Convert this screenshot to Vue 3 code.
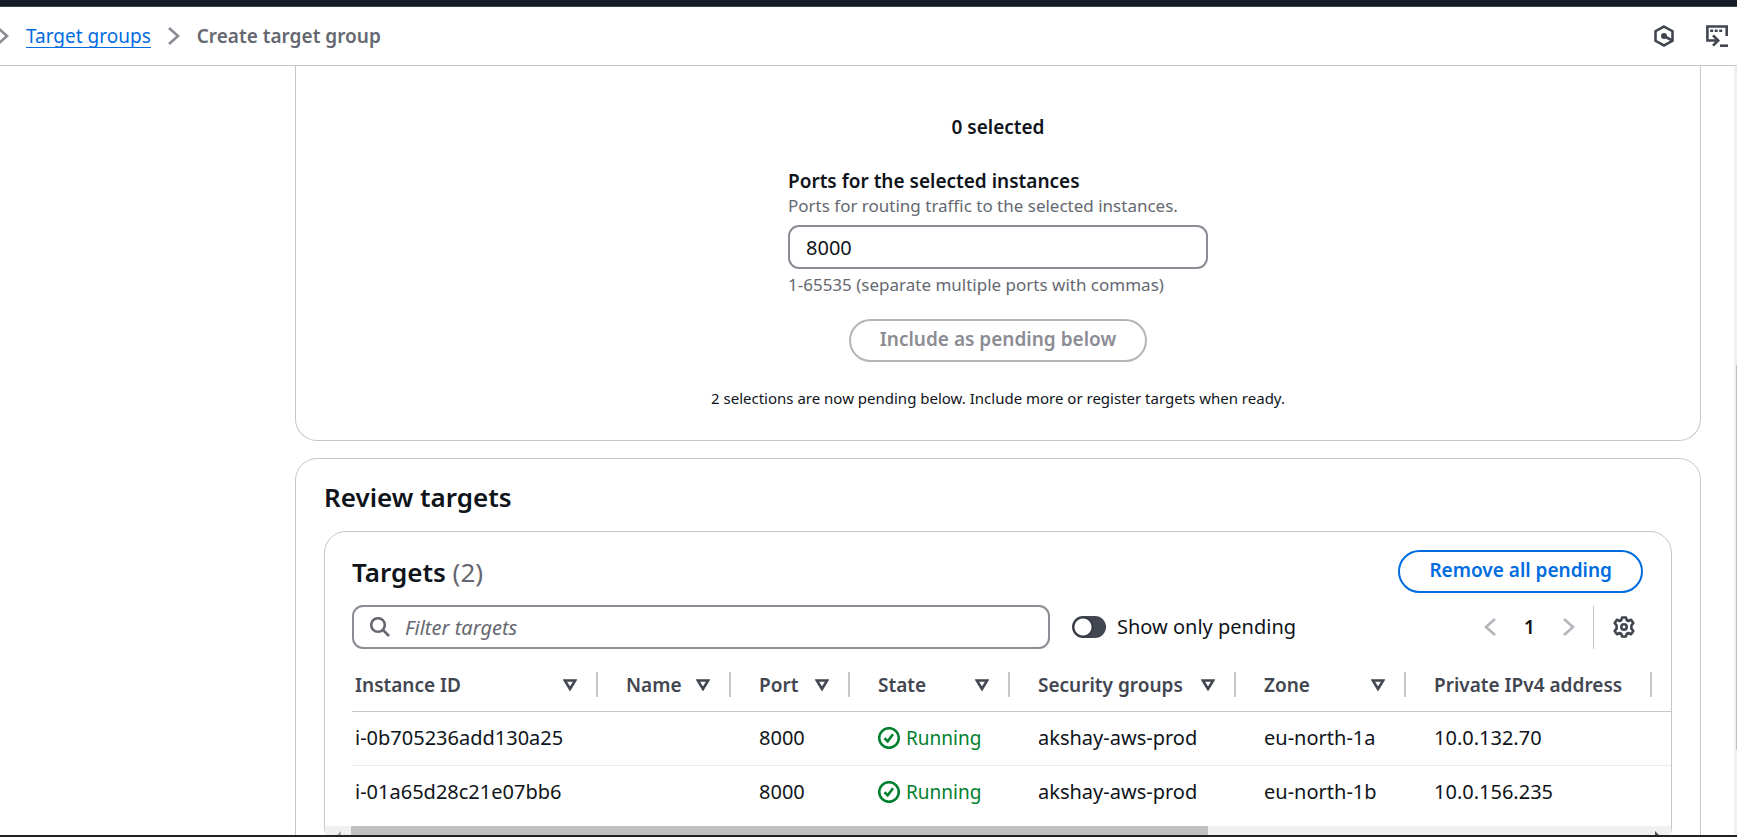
<script setup>
import { ref } from 'vue'

const ports = ref('8000')
const filter = ref('')
const onlyPending = ref(false)

const columns = [
  { key: 'id', label: 'Instance ID', sortable: true },
  { key: 'name', label: 'Name', sortable: true },
  { key: 'port', label: 'Port', sortable: true },
  { key: 'state', label: 'State', sortable: true },
  { key: 'groups', label: 'Security groups', sortable: true },
  { key: 'zone', label: 'Zone', sortable: true },
  { key: 'ip', label: 'Private IPv4 address', sortable: false }
]

const rows = [
  { id: 'i-0b705236add130a25', name: '', port: '8000', state: 'Running', groups: 'akshay-aws-prod', zone: 'eu-north-1a', ip: '10.0.132.70' },
  { id: 'i-01a65d28c21e07bb6', name: '', port: '8000', state: 'Running', groups: 'akshay-aws-prod', zone: 'eu-north-1b', ip: '10.0.156.235' }
]
</script>

<template>
  <div class="app">
    <div class="topbar"></div>
    <header class="header">
      <nav class="crumbs" aria-label="Breadcrumbs">
        <svg class="chev" viewBox="0 0 12 20" aria-hidden="true"><path d="M1 2l9 8-9 8" /></svg>
        <a href="#">Target groups</a>
        <svg class="chev" viewBox="0 0 12 20" aria-hidden="true"><path d="M1 2l9 8-9 8" /></svg>
        <span class="current" aria-current="page">Create target group</span>
      </nav>
      <div class="tools">
        <button type="button" class="tool" aria-label="Resources">
          <svg viewBox="0 0 22 22" aria-hidden="true">
            <path d="M11 1.6l8.5 4.6v9.6L11 20.4l-8.500-4.600V6.200z" />
            <path d="M11 11l8 4.300" />
            <circle cx="11" cy="11" r="3" class="solid" />
          </svg>
        </button>
        <button type="button" class="tool" aria-label="CloudShell">
          <svg viewBox="0 0 22 22" aria-hidden="true">
            <path d="M20.700 11V1.500H1.400v14h10" />
            <path d="M7 10.300l5.200 5.200L7 20.700" />
            <path d="M14 20.700h8" />
            <path d="M4.200 5.700h3M8.700 5.700h3M13.200 5.700h3" />
          </svg>
        </button>
      </div>
    </header>

    <div class="viewport">
      <main class="content">
        <section class="card register">
          <p class="selected">0 selected</p>
          <div class="field">
            <label for="ports">Ports for the selected instances</label>
            <p class="desc">Ports for routing traffic to the selected instances.</p>
            <input id="ports" v-model="ports" class="box" type="text" />
            <p class="hint">1-65535 (separate multiple ports with commas)</p>
          </div>
          <button type="button" class="btn muted" disabled>Include as pending below</button>
          <p class="note">2 selections are now pending below. Include more or register targets when ready.</p>
        </section>

        <section class="card review">
          <h2>Review targets</h2>
          <div class="panel">
            <div class="panel-head">
              <h3>Targets <span>(2)</span></h3>
              <button type="button" class="btn">Remove all pending</button>
            </div>
            <div class="filters">
              <div class="search">
                <svg viewBox="0 0 20 20" aria-hidden="true"><circle cx="8" cy="8" r="6.800" /><path d="M13 13l6 6" /></svg>
                <input v-model="filter" class="box" type="text" placeholder="Filter targets" aria-label="Filter targets" />
              </div>
              <label class="toggle">
                <input v-model="onlyPending" type="checkbox" role="switch" />
                Show only pending
              </label>
              <div class="pager">
                <button type="button" class="page-btn" aria-label="Previous page" disabled>
                  <svg class="chev" viewBox="0 0 12 20" aria-hidden="true"><path d="M11 2l-9 8 9 8" /></svg>
                </button>
                <button type="button" class="page-num" aria-current="page">1</button>
                <button type="button" class="page-btn" aria-label="Next page" disabled>
                  <svg class="chev" viewBox="0 0 12 20" aria-hidden="true"><path d="M1 2l9 8-9 8" /></svg>
                </button>
                <span class="rule"></span>
                <button type="button" class="tool" aria-label="Preferences">
                  <svg viewBox="0 0 22 22" aria-hidden="true">
                    <path stroke-linejoin="round" d="M9 1.500h4l.6 2.500 1.800 1 2.600-1.200 2.300 3.300-1.900 2.200v3.400l1.900 2.200-2.300 3.300-2.600-1.200-1.800 1-.6 2.500H9l-.6-2.500-1.800-1L4 18.200l-2.300-3.300 1.900-2.200V9.300L1.700 7.100 4 3.800 6.600 5l1.800-1z" />
                    <circle cx="11" cy="11" r="2.700" />
                  </svg>
                </button>
              </div>
            </div>

            <div class="table-wrap">
              <table>
                <colgroup>
                  <col v-for="c in columns" :key="c.key" :class="'c-' + c.key" />
                  <col />
                </colgroup>
                <thead>
                  <tr>
                    <th v-for="c in columns" :key="c.key" scope="col">
                      <div class="th">
                        {{ c.label }}
                        <svg v-if="c.sortable" viewBox="0 0 14 12" aria-hidden="true"><path d="M1.800 1.500h10.400L7 10z" /></svg>
                      </div>
                    </th>
                    <td></td>
                  </tr>
                </thead>
                <tbody>
                  <tr v-for="r in rows" :key="r.id">
                    <td v-for="c in columns" :key="c.key">
                      <span v-if="c.key === 'state'" class="status">
                        <svg viewBox="0 0 22 22" aria-hidden="true"><circle cx="11" cy="11" r="9.800" /><path d="M6.500 11.300l3.200 3 5.300-7" /></svg>
                        {{ r.state }}
                      </span>
                      <template v-else>{{ r[c.key] }}</template>
                    </td>
                    <td></td>
                  </tr>
                </tbody>
              </table>
            </div>
            <div class="hscroll" aria-hidden="true">
              <svg viewBox="0 0 22 9"><path d="M16 5v4h-4z" fill="#a3a3a3" /></svg>
              <span class="track"><span class="thumb"></span></span>
              <svg viewBox="0 0 22 9"><path d="M6 5v4h4z" fill="#505050" /></svg>
            </div>
          </div>
        </section>
      </main>
      <div class="vscroll" aria-hidden="true"><span></span></div>
    </div>
    <div class="taskbar"></div>
  </div>
</template>

<style>
body {
  margin: 0;
  background: #fff;
}
</style>

<style scoped>
.app {
  display: flex;
  flex-direction: column;
  height: 100vh;
  overflow: hidden;
  color: #0f141a;
  font-family: "Noto Sans", "Open Sans", sans-serif;
  font-size: 19px;
  line-height: 26px;
}
.app * {
  box-sizing: border-box;
}
p, h2, h3 {
  margin: 0;
}
button, input {
  font: inherit;
  color: inherit;
}
svg {
  display: block;
  flex: none;
  fill: none;
  stroke: currentColor;
  stroke-width: 2.6;
}
.topbar {
  flex: none;
  height: 7px;
  background: #161d26;
  border-bottom: 1px solid #424650;
}
.header {
  flex: none;
  display: flex;
  align-items: center;
  justify-content: space-between;
  height: 59px;
  padding-right: 9px;
  border-bottom: 1px solid #c6c6cd;
}
.crumbs {
  display: flex;
  align-items: center;
  gap: 17px;
  margin-left: -3px;
}
.crumbs a {
  color: #006ce0;
  line-height: 22px;
  text-decoration: none;
  border-bottom: 1px solid #006ce0;
}
.chev {
  width: 12px;
  height: 20px;
  color: #8c8c94;
}
.current {
  padding-bottom: 1px;
  color: #656871;
  font-weight: 600;
}
.tools {
  display: flex;
  gap: 31px;
}
.tool {
  padding: 0;
  border: 0;
  background: none;
  color: #424650;
}
.tool svg {
  width: 22px;
  height: 22px;
}
.solid {
  fill: currentColor;
  stroke: none;
}
.viewport {
  flex: 1;
  min-height: 0;
  display: flex;
}
.content {
  flex: 1;
  min-width: 0;
  overflow: hidden;
  padding: 0 33px 0 295px;
}
.vscroll {
  flex: none;
  width: 3px;
  padding: 299px 0 85px 2px;
  background: #f0f0f0;
}
.vscroll span {
  display: block;
  height: 100%;
  background: #c1c1c1;
}
.card {
  border: 1px solid #c6c6cd;
  border-radius: 22px;
}
.register {
  display: flex;
  flex-direction: column;
  align-items: center;
  padding: 48px 28px 30px;
  border-top: 0;
  border-radius: 0 0 22px 22px;
}
.selected {
  font-weight: 600;
}
.field {
  display: flex;
  flex-direction: column;
  width: 420px;
  margin-top: 28px;
}
.field label {
  font-weight: 600;
}
.desc, .hint {
  color: #656871;
  font-size: 17px;
  line-height: 24px;
}
.box {
  width: 100%;
  height: 44px;
  padding: 0 16px;
  border: 2px solid #8c8c94;
  border-radius: 11px;
  background: #fff;
  font-size: 20px;
}
.desc {
  margin-bottom: 7px;
}
.hint {
  margin-top: 4px;
}
.btn {
  height: 43px;
  padding: 0 29px 3px;
  border: 2px solid #006ce0;
  border-radius: 22px;
  background: #fff;
  color: #006ce0;
  font-weight: 600;
}
.btn.muted {
  margin-top: 22px;
  border-color: #b4b4bb;
  color: #8c8c94;
}
.note {
  margin-top: 24px;
  font-size: 15px;
  line-height: 24px;
}
.review {
  margin-top: 17px;
  padding: 21px 28px 28px;
}
h2, h3 {
  font-size: 26px;
  line-height: 34px;
  font-weight: 600;
}
h3 span {
  color: #656871;
  font-weight: 400;
}
.panel {
  margin-top: 17px;
  border: 1px solid #c6c6cd;
  border-radius: 22px;
}
.panel-head {
  display: flex;
  align-items: center;
  justify-content: space-between;
  padding: 18px 28px 12px 27px;
}
.filters {
  display: flex;
  align-items: center;
  padding: 0 28px 0 27px;
}
.search {
  position: relative;
  flex: 1;
  max-width: 698px;
}
.search svg {
  position: absolute;
  left: 18px;
  top: 12px;
  width: 20px;
  height: 20px;
  color: #656871;
}
.search .box {
  display: block;
  padding-left: 51px;
}
.search .box::placeholder {
  color: #656871;
  font-style: italic;
  opacity: 1;
}
.toggle {
  display: flex;
  align-items: center;
  gap: 11px;
  margin-left: 22px;
  font-size: 20px;
}
.toggle input {
  appearance: none;
  width: 34px;
  height: 22px;
  margin: 0;
  border-radius: 11px;
  background: radial-gradient(circle at 11px 11px, #fff 8px, #2f333b 9px, #424650 11px);
}
.pager {
  display: flex;
  align-items: center;
  margin-left: auto;
  padding-right: 8px;
}
.page-btn, .page-num {
  padding: 0;
  border: 0;
  background: none;
}
.page-btn .chev {
  color: #b4b4bb;
}
.page-num {
  width: 67px;
  font-weight: 600;
}
.rule {
  width: 1px;
  height: 43px;
  margin: 0 19px 0 18px;
  background: #c6c6cd;
}
.table-wrap {
  margin-top: 10px;
  padding-left: 27px;
}
table {
  width: 100%;
  table-layout: fixed;
  border-collapse: collapse;
}
.c-id { width: 246px; }
.c-name { width: 133px; }
.c-port { width: 119px; }
.c-state { width: 160px; }
.c-groups { width: 226px; }
.c-zone { width: 170px; }
.c-ip { width: 246px; }
th, td {
  padding: 0;
  text-align: left;
  white-space: nowrap;
}
thead tr {
  height: 52px;
  border-bottom: 1px solid #c6c6cd;
}
.th {
  display: flex;
  align-items: center;
  justify-content: space-between;
  height: 25px;
  padding: 0 19px 0 28px;
  border-right: 2px solid #c6c6cd;
  color: #424650;
  font-weight: 600;
}
.th svg {
  width: 14px;
  height: 12px;
}
tbody tr {
  height: 54px;
  font-size: 20px;
}
tbody tr + tr {
  height: 53px;
  border-top: 1px solid #ebebf0;
}
tbody td {
  padding-left: 28px;
}
th:first-child .th {
  padding-left: 3px;
}
tbody td:first-child {
  padding-left: 3px;
}
.status {
  display: flex;
  align-items: center;
  gap: 6px;
  color: #00802f;
  font-size: 19px;
}
.status svg {
  width: 22px;
  height: 22px;
}
.hscroll {
  display: flex;
  height: 22px;
  margin-top: 8px;
  background: #f0f0f0;
}
.hscroll svg {
  width: 22px;
  height: 9px;
  stroke: none;
}
.hscroll .track {
  flex: 1;
  padding-left: 4px;
}
.hscroll .thumb {
  display: block;
  width: 66%;
  height: 100%;
  background: #c1c1c1;
}
.taskbar {
  flex: none;
  height: 2px;
  background: #202124;
}
</style>
